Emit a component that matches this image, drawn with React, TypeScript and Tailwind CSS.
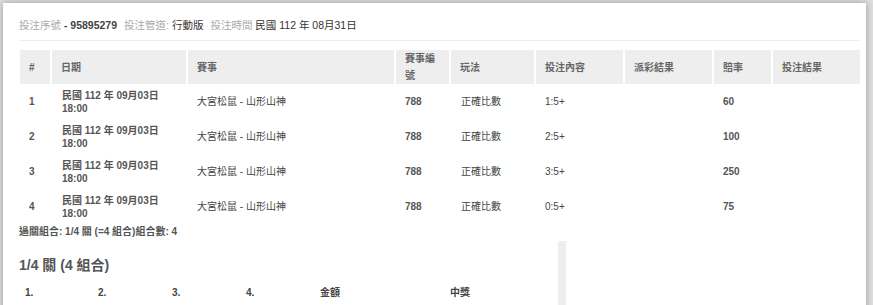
const font = { fontFamily: '"Liberation Sans", Arial, "Noto Sans CJK TC", sans-serif' };

type Bet = {
  no: number;
  date: string;
  time: string;
  match: string;
  code: string;
  play: string;
  pick: string;
  odds: string;
};

const bets: Bet[] = [
  { no: 1, date: "民國 112 年 09月03日", time: "18:00", match: "大宮松鼠 - 山形山神", code: "788", play: "正確比數", pick: "1:5+", odds: "60" },
  { no: 2, date: "民國 112 年 09月03日", time: "18:00", match: "大宮松鼠 - 山形山神", code: "788", play: "正確比數", pick: "2:5+", odds: "100" },
  { no: 3, date: "民國 112 年 09月03日", time: "18:00", match: "大宮松鼠 - 山形山神", code: "788", play: "正確比數", pick: "3:5+", odds: "250" },
  { no: 4, date: "民國 112 年 09月03日", time: "18:00", match: "大宮松鼠 - 山形山神", code: "788", play: "正確比數", pick: "0:5+", odds: "75" },
];

const cols = "grid grid-cols-[32px_136px_208px_55px_85px_89px_89px_59px_87px]";

const headers = ["#", "日期", "賽事", "賽事編號", "玩法", "投注內容", "派彩結果", "賠率", "投注結果"];

export default function App() {
  return (
    <div className="w-[873px] h-[305px] overflow-hidden bg-[#dedede]" style={font}>
      <div className="ml-[3px] mt-[3px] w-[863px] h-[310px] bg-white shadow-[0_0_7px_rgba(0,0,0,0.3)] pl-[16px] pr-[6px] pt-[15px]">
        {/* 投注資訊 */}
        <div className="text-[10.5px] leading-[14px] text-[#aaa] pb-[8px] border-b border-[#eee]">
          投注序號 <span className="font-bold text-[#444]">- 95895279</span>
          <span className="ml-[7px]">投注管道:</span> <span className="text-[#333]">行動版</span>
          <span className="ml-[7px]">投注時間</span> <span className="text-[#333]">民國 112 年 08月31日</span>
        </div>

        <div className="mt-[9px] ml-[1px] w-[840px]">
          <div className={`${cols} h-[34px] bg-[#eee] text-[10px] font-bold text-[#666] leading-[17px]`}>
            {headers.map((h, i) => (
              <div
                key={h}
                className={`flex items-center pl-[9px] pr-[6px] ${i < headers.length - 1 ? "border-r-2 border-white" : ""}`}
              >
                {h === "賽事編號" ? (
                  <span>
                    賽事編
                    <br />號
                  </span>
                ) : (
                  h
                )}
              </div>
            ))}
          </div>

          {bets.map((b) => (
            <div key={b.no} className={`${cols} h-[35px] text-[10px] text-[#444] leading-[13px] items-center`}>
              <div className="pl-[9px] font-bold text-[#555]">{b.no}</div>
              <div className="pl-[10px] font-bold text-[#555]">
                {b.date}
                <br />
                {b.time}
              </div>
              <div className="pl-[9px]">{b.match}</div>
              <div className="pl-[9px] font-bold text-[#555]">{b.code}</div>
              <div className="pl-[10px]">{b.play}</div>
              <div className="pl-[9px]">{b.pick}</div>
              <div className="pl-[9px]"></div>
              <div className="pl-[9px] font-bold text-[#555]">{b.odds}</div>
              <div className="pl-[9px]"></div>
            </div>
          ))}
        </div>

        <div className="mt-[1px] text-[10px] leading-[14px] font-bold text-[#555]">
          過關組合: 1/4 關 (=4 組合)組合數: 4
        </div>

        <div className="flex mt-[2px]">
          <div className="w-[539px] pt-[14px]">
            <div className="text-[14px] leading-[20px] font-bold text-[#555]">1/4 關 (4 組合)</div>
            <div className="mt-[11px] flex text-[10px] leading-[14px] font-bold text-[#444] pl-[6px]">
              <div className="w-[73px]">1.</div>
              <div className="w-[74px]">2.</div>
              <div className="w-[74px]">3.</div>
              <div className="w-[74px]">4.</div>
              <div className="w-[130px]">金額</div>
              <div>中獎</div>
            </div>
          </div>
          <div className="w-[8px] h-[80px] bg-[#eee]"></div>
        </div>
      </div>
    </div>
  );
}
